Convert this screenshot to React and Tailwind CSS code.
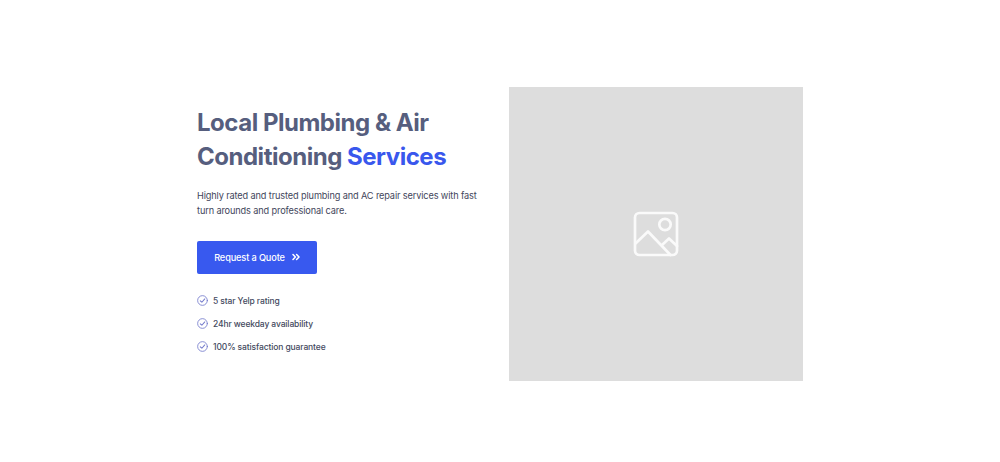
const benefits = ["5 star Yelp rating", "24hr weekday availability", "100% satisfaction guarantee"];

function CheckIcon() {
  return (
    <svg viewBox="0 0 12 12" className="size-[11px] shrink-0" fill="none" stroke="#7178cb" strokeLinecap="round" strokeLinejoin="round">
      <circle cx="6" cy="6" r="5.3" strokeWidth="0.9" />
      <path d="M3.6 6.4 5.3 7.9 8.5 4.3" strokeWidth="1.1" />
    </svg>
  );
}

function ChevronsIcon() {
  return (
    <svg viewBox="0 0 8 8" className="mb-px ml-[7px] size-2" fill="none" stroke="white" strokeWidth="1.5" strokeLinecap="round" strokeLinejoin="round">
      <path d="M1 1.5 3.4 4 1 6.5M4.6 1.5 7 4 4.6 6.5" />
    </svg>
  );
}

function PictureIcon() {
  return (
    <svg viewBox="0 0 46 46" className="size-[46px]" fill="none" stroke="#fafafa" strokeWidth="2.7" strokeLinecap="round" strokeLinejoin="round">
      <rect x="2" y="2" width="42" height="42" rx="4.5" />
      <circle cx="32" cy="13.5" r="5.7" />
      <path d="M2.5 32.5 15 20.5 37.5 44M28.5 34.5 36 27.5 44 35" />
    </svg>
  );
}

export default function App() {
  return (
    <main className="flex h-[462px] justify-center overflow-hidden bg-white pt-[87px] font-['Inter',sans-serif]">
      <section className="flex h-[294px] w-[606px] justify-between">
        <div className="w-[290px] pt-[19px]">
          <h1 className="whitespace-nowrap text-[24px] leading-[34px] font-bold tracking-[-0.48px] text-[#565e7e]">
            <span className="block">Local Plumbing &amp; Air</span>
            <span className="block">
              Conditioning <span className="text-[#3957ed]">Services</span>
            </span>
          </h1>
          <p className="mt-[14px] whitespace-nowrap text-[9.2px] leading-[15px] tracking-[-0.13px] text-[#3f465b]">
            <span className="block">Highly rated and trusted plumbing and AC repair services with fast</span>
            <span className="block">turn arounds and professional care.</span>
          </p>
          <button className="mt-[23px] flex h-[33px] w-[120px] items-center justify-center rounded-[2px] bg-[#3859ef] text-[9.2px] font-medium tracking-[-0.13px] whitespace-nowrap text-white">
            <span className="pt-px">Request a Quote</span>
            <ChevronsIcon />
          </button>
          <ul className="mt-[15px] text-[8.5px] font-medium tracking-[-0.12px] text-[#444a60]">
            {benefits.map((benefit) => (
              <li key={benefit} className="flex h-[23px] items-center gap-[5px] whitespace-nowrap">
                <CheckIcon />
                <span className="pt-[2px]">{benefit}</span>
              </li>
            ))}
          </ul>
        </div>
        <div className="flex size-[294px] items-center justify-center bg-[#dddddd]">
          <PictureIcon />
        </div>
      </section>
    </main>
  );
}
